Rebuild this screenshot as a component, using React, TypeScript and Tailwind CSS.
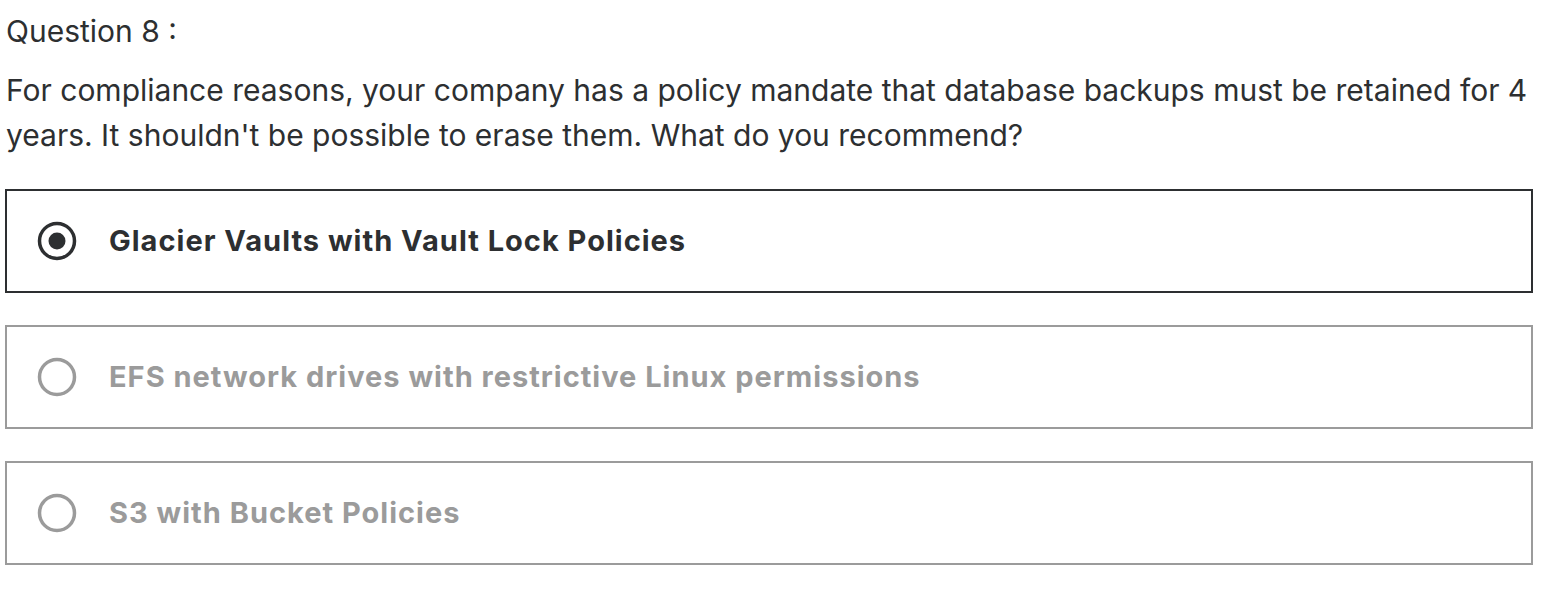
import React from "react";

const options = [
  { label: "Glacier Vaults with Vault Lock Policies", selected: true },
  { label: "EFS network drives with restrictive Linux permissions", selected: false },
  { label: "S3 with Bucket Policies", selected: false },
];

function Radio({ selected }: { selected: boolean }) {
  return (
    <svg width="40" height="40" viewBox="0 0 40 40" className="shrink-0">
      <circle
        cx="20"
        cy="20"
        r="17.5"
        fill="none"
        stroke={selected ? "#2d2f31" : "#9b9b9b"}
        strokeWidth="3.5"
      />
      {selected && <circle cx="20" cy="20" r="8.5" fill="#2d2f31" />}
    </svg>
  );
}

export default function App() {
  return (
    <div
      className="w-[1566px] h-[614px] bg-white text-[#2d2f31] pl-[6px] pr-[33px] pt-[9px]"
      style={{ fontFamily: 'Inter, "Liberation Sans", Arial, sans-serif' }}
    >
      <div className="text-[30px] leading-[44px]">Question 8 :</div>
      <p className="mt-[15px] text-[30px] leading-[45px] whitespace-nowrap">
        For compliance reasons, your company has a policy mandate that database backups must be retained for 4
        <br />
        years. It shouldn't be possible to erase them. What do you recommend?
      </p>
      <div className="mt-[31px] ml-[-1px] flex flex-col gap-[32px]">
        {options.map((o) => (
          <div
            key={o.label}
            className={`h-[104px] border-2 flex items-center pl-[30px] gap-[32px] ${
              o.selected ? "border-[#2d2f31] text-[#2d2f31]" : "border-[#9b9b9b] text-[#9b9b9b]"
            }`}
          >
            <Radio selected={o.selected} />
            <span className="text-[29px] font-bold tracking-[1px]">{o.label}</span>
          </div>
        ))}
      </div>
    </div>
  );
}
